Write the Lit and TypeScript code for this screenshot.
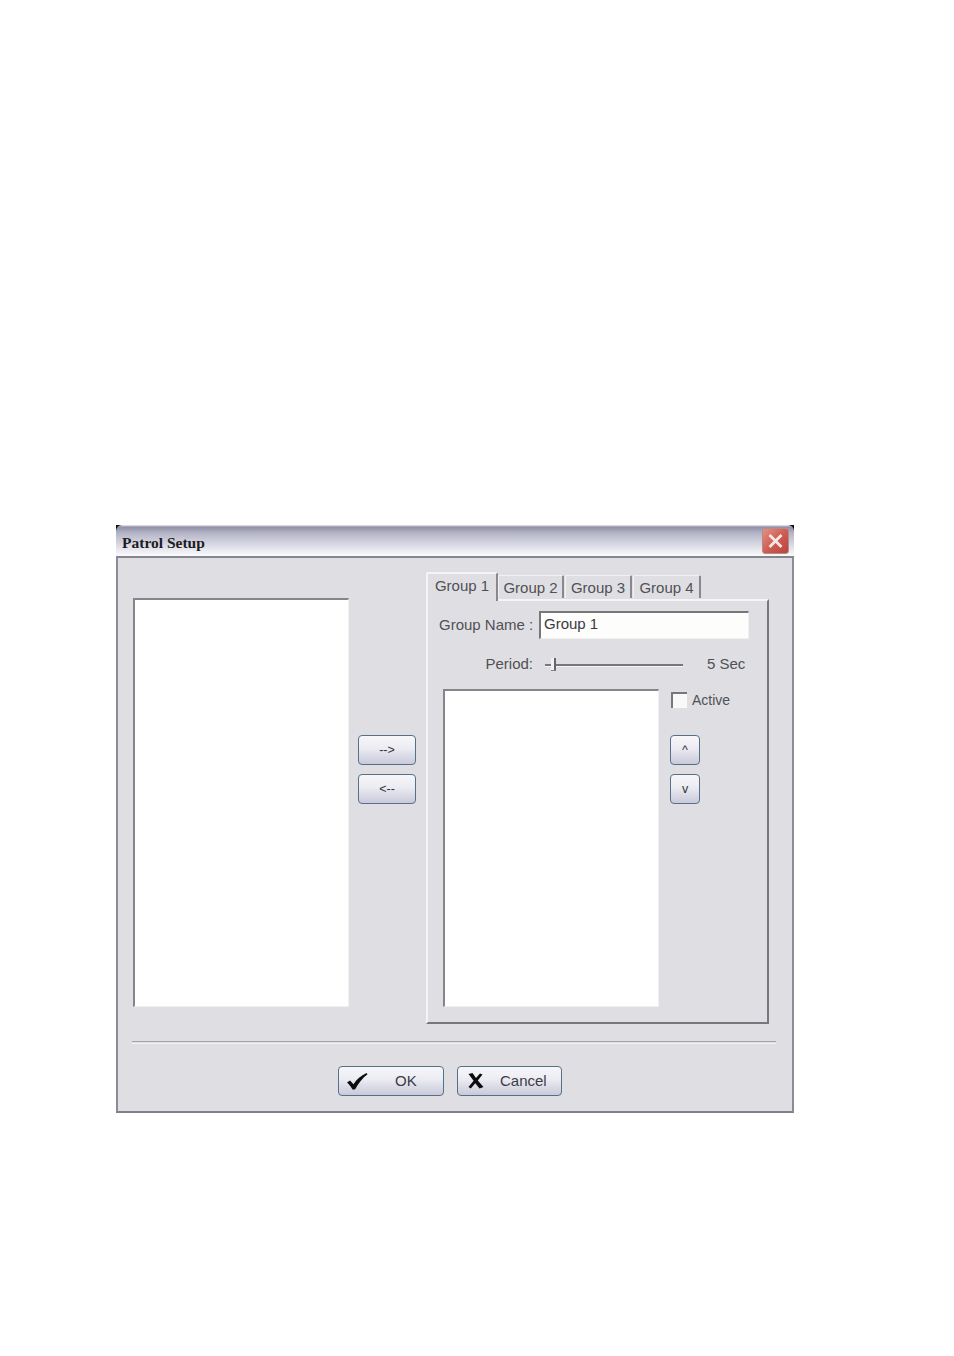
import { LitElement, html, css } from "lit";
import { customElement } from "lit/decorators.js";

@customElement("app-root")
export class AppRoot extends LitElement {
  static styles = css`
    :host { display: block; width: 954px; height: 1356px; background: #fff; padding: 525px 0 0 116px; box-sizing: border-box; font-family: "Liberation Sans", Arial, sans-serif; color: #505056; font-size: 15px; }
    .win { isolation: isolate; position: relative; width: 678px; height: 588px; display: flex; flex-direction: column; background: #dfdfe3; box-sizing: border-box; border-left: 2px solid #8c8c96; border-right: 2px solid #8c8c96; border-bottom: 2px solid #80808c; }
    .title { position: relative; flex: none; margin: 0 -2px; height: 33px; box-sizing: border-box; border-bottom: 2px solid #85858f; border-radius: 6px 6px 0 0; background: linear-gradient(#f0f0f4 0, #8f8fa6 2px, #b4b4c6 8px, #d4d4e0 18px, #fbfbfd 31px); display: flex; align-items: center; justify-content: space-between; padding: 2px 5px 0 6px; }
    .corner { position: absolute; top: 0; width: 6px; height: 6px; background: #0c0c0c; z-index: -1; }
    .corner.l { left: -2px; }
    .corner.r { right: -2px; }
    .title-text { font-family: "Liberation Serif", serif; font-weight: 700; font-size: 15.5px; color: #1c1c24; margin-top: 2px; }
    .close { width: 27px; height: 26px; margin-top: -2px; border-radius: 3px; background: linear-gradient(135deg, #e29184, #cc5a4e 55%, #b8463e); border: 1px solid #b98a85; box-sizing: border-box; display: flex; align-items: center; justify-content: center; }
    .body { flex: 1; display: flex; flex-direction: column; padding: 14px 15px 0 15px; }
    .top { display: flex; height: 452px; }
    .list { background: #fff; box-sizing: border-box; border-top: 2px solid #85858a; border-left: 2px solid #85858a; border-right: 1px solid #f0f0f2; border-bottom: 1px solid #f0f0f2; }
    .left-list { width: 216px; height: 409px; margin-top: 26px; flex: none; }
    .mid { flex: none; width: 77px; padding: 163px 0 0 9px; box-sizing: border-box; display: flex; flex-direction: column; gap: 9px; }
    .btn { box-sizing: border-box; border: 1.5px solid #567088; border-radius: 4px; background: linear-gradient(#f7f7fa 0, #ebebf2 45%, #c9c9db 100%); display: flex; align-items: center; justify-content: center; color: #333; font-size: 12.5px; }
    .mv { width: 58px; height: 30px; }
    .ud { width: 30px; height: 30px; }
    .right { flex: none; width: 343px; display: flex; flex-direction: column; }
    .tabs { display: flex; align-items: flex-end; height: 27px; flex: none; position: relative; z-index: 1; }
    .tab { box-sizing: border-box; height: 23px; border-top: 1px solid #f2f2f4; border-left: 1px solid #f2f2f4; border-right: 2px solid #88888e; display: flex; align-items: center; justify-content: center; border-radius: 2px 2px 0 0; margin-bottom: 1px; margin-right: 1px; }
    .tab.on { height: 29px; width: 72px; margin: 0 0 -2px; padding-bottom: 5px; background: #dfdfe3; border-top: 2px solid #f4f4f6; border-left: 2px solid #f4f4f6; }
    .panel { flex: 1; box-sizing: border-box; border-top: 2px solid #f4f4f6; border-left: 2px solid #f4f4f6; border-right: 2px solid #77777d; border-bottom: 2px solid #77777d; padding: 10px 18px 0 11px; display: flex; flex-direction: column; }
    .row1 { display: flex; align-items: center; justify-content: space-between; height: 28px; }
    .label { padding-bottom: 2px; }
    .input { width: 210px; height: 28px; box-sizing: border-box; background: #fdfdfb; border-top: 2px solid #77777a; border-left: 2px solid #77777a; border-right: 1px solid #f0f0f2; border-bottom: 1px solid #f0f0f2; padding: 0 0 5px 3px; display: flex; align-items: center; color: #3a3a3e; }
    .row2 { display: flex; align-items: center; height: 22px; margin-top: 14px; }
    .period { width: 94px; text-align: right; flex: none; padding-bottom: 2px; }
    .track { width: 138px; margin: 2px 0 0 12px; height: 3px; background: #77777c; border-bottom: 1px solid #f4f4f6; box-sizing: border-box; position: relative; flex: none; }
    .thumb { position: absolute; left: 6px; top: -6px; width: 5px; height: 13px; border-right: 2px solid #66666c; border-bottom: 1px solid #88888c; background: #f2f2f5; box-sizing: border-box; }
    .sec { margin-left: 24px; padding-bottom: 2px; }
    .row3 { display: flex; margin-top: 14px; }
    .inner-list { width: 216px; height: 318px; flex: none; margin-left: 4px; }
    .side { flex: none; margin-left: 11px; width: 80px; display: flex; flex-direction: column; align-items: flex-start; }
    .active { display: flex; align-items: center; height: 22px; gap: 5px; font-size: 14px; padding-left: 1px; }
    .cb { width: 16px; height: 16px; box-sizing: border-box; background: #f8f8f8; border-top: 2px solid #77777a; border-left: 2px solid #77777a; }
    .ud1 { margin-top: 24px; }
    .ud2 { margin-top: 9px; }
    .sep { margin: 17px 1px 0 -1px; height: 3px; box-sizing: border-box; border-top: 1px solid #a4a4aa; border-bottom: 1px solid #f2f2f4; flex: none; }
    .foot { display: flex; gap: 13px; margin: 22px 0 0 205px; }
    .fb { height: 30px; width: 106px; box-sizing: border-box; position: relative; justify-content: flex-start; font-size: 15px; color: #3c3c44; }
    .fb span { padding-bottom: 2px; }
    .fb svg { margin-left: 7px; flex: none; }
    .fb.ok span { margin-left: 27px; }
    .fb.cancel { width: 105px; }
    .fb.cancel svg { margin-left: 10px; }
    .fb.cancel span { margin-left: 16px; }
  `;

  render() {
    return html`
      <div class="win">
        <div class="corner l"></div>
        <div class="corner r"></div>
        <div class="title">
          <span class="title-text">Patrol Setup</span>
          <div class="close">
            <svg width="17" height="16" viewBox="0 0 17 16"><path d="M2.5 2 L14.5 14 M14.5 2 L2.5 14" stroke="#f6e8e6" stroke-width="2.8" fill="none"/></svg>
          </div>
        </div>
        <div class="body">
          <div class="top">
            <div class="list left-list"></div>
            <div class="mid">
              <div class="btn mv">--&gt;</div>
              <div class="btn mv">&lt;--</div>
            </div>
            <div class="right">
              <div class="tabs">
                <div class="tab on">Group 1</div>
                <div class="tab" style="width:66px">Group 2</div>
                <div class="tab" style="width:67px">Group 3</div>
                <div class="tab" style="width:68px">Group 4</div>
              </div>
              <div class="panel">
                <div class="row1"><span class="label">Group Name :</span><div class="input">Group 1</div></div>
                <div class="row2">
                  <span class="period">Period:</span>
                  <div class="track"><div class="thumb"></div></div>
                  <span class="sec">5 Sec</span>
                </div>
                <div class="row3">
                  <div class="list inner-list"></div>
                  <div class="side">
                    <div class="active"><div class="cb"></div><span>Active</span></div>
                    <div class="btn ud ud1">^</div>
                    <div class="btn ud ud2">v</div>
                  </div>
                </div>
              </div>
            </div>
          </div>
          <div class="sep"></div>
          <div class="foot">
            <div class="btn fb ok">
              <svg width="22" height="18" viewBox="0 0 22 18"><path d="M1 10.5 L4 8.5 L7.5 12.2 C10.5 7.5 15 3.5 20.5 1 L21.5 2.2 C16.5 6 12.5 11 9 17.5 L6.5 17.5 C5 14.8 3.2 12.6 1 10.5 Z" fill="#0c0c0c"/></svg>
              <span>OK</span>
            </div>
            <div class="btn fb cancel">
              <svg width="16" height="16" viewBox="0 0 16 16"><path d="M0.5 1 L4.5 0 L8 5 L12 0.5 L14.5 1.5 L9.8 7.5 L15.5 14 L11.5 15.5 L7.3 10.2 L2.8 15.5 L0.5 14 L5.6 7.8 Z" fill="#0c0c0c"/></svg>
              <span>Cancel</span>
            </div>
          </div>
        </div>
      </div>
    `;
  }
}
